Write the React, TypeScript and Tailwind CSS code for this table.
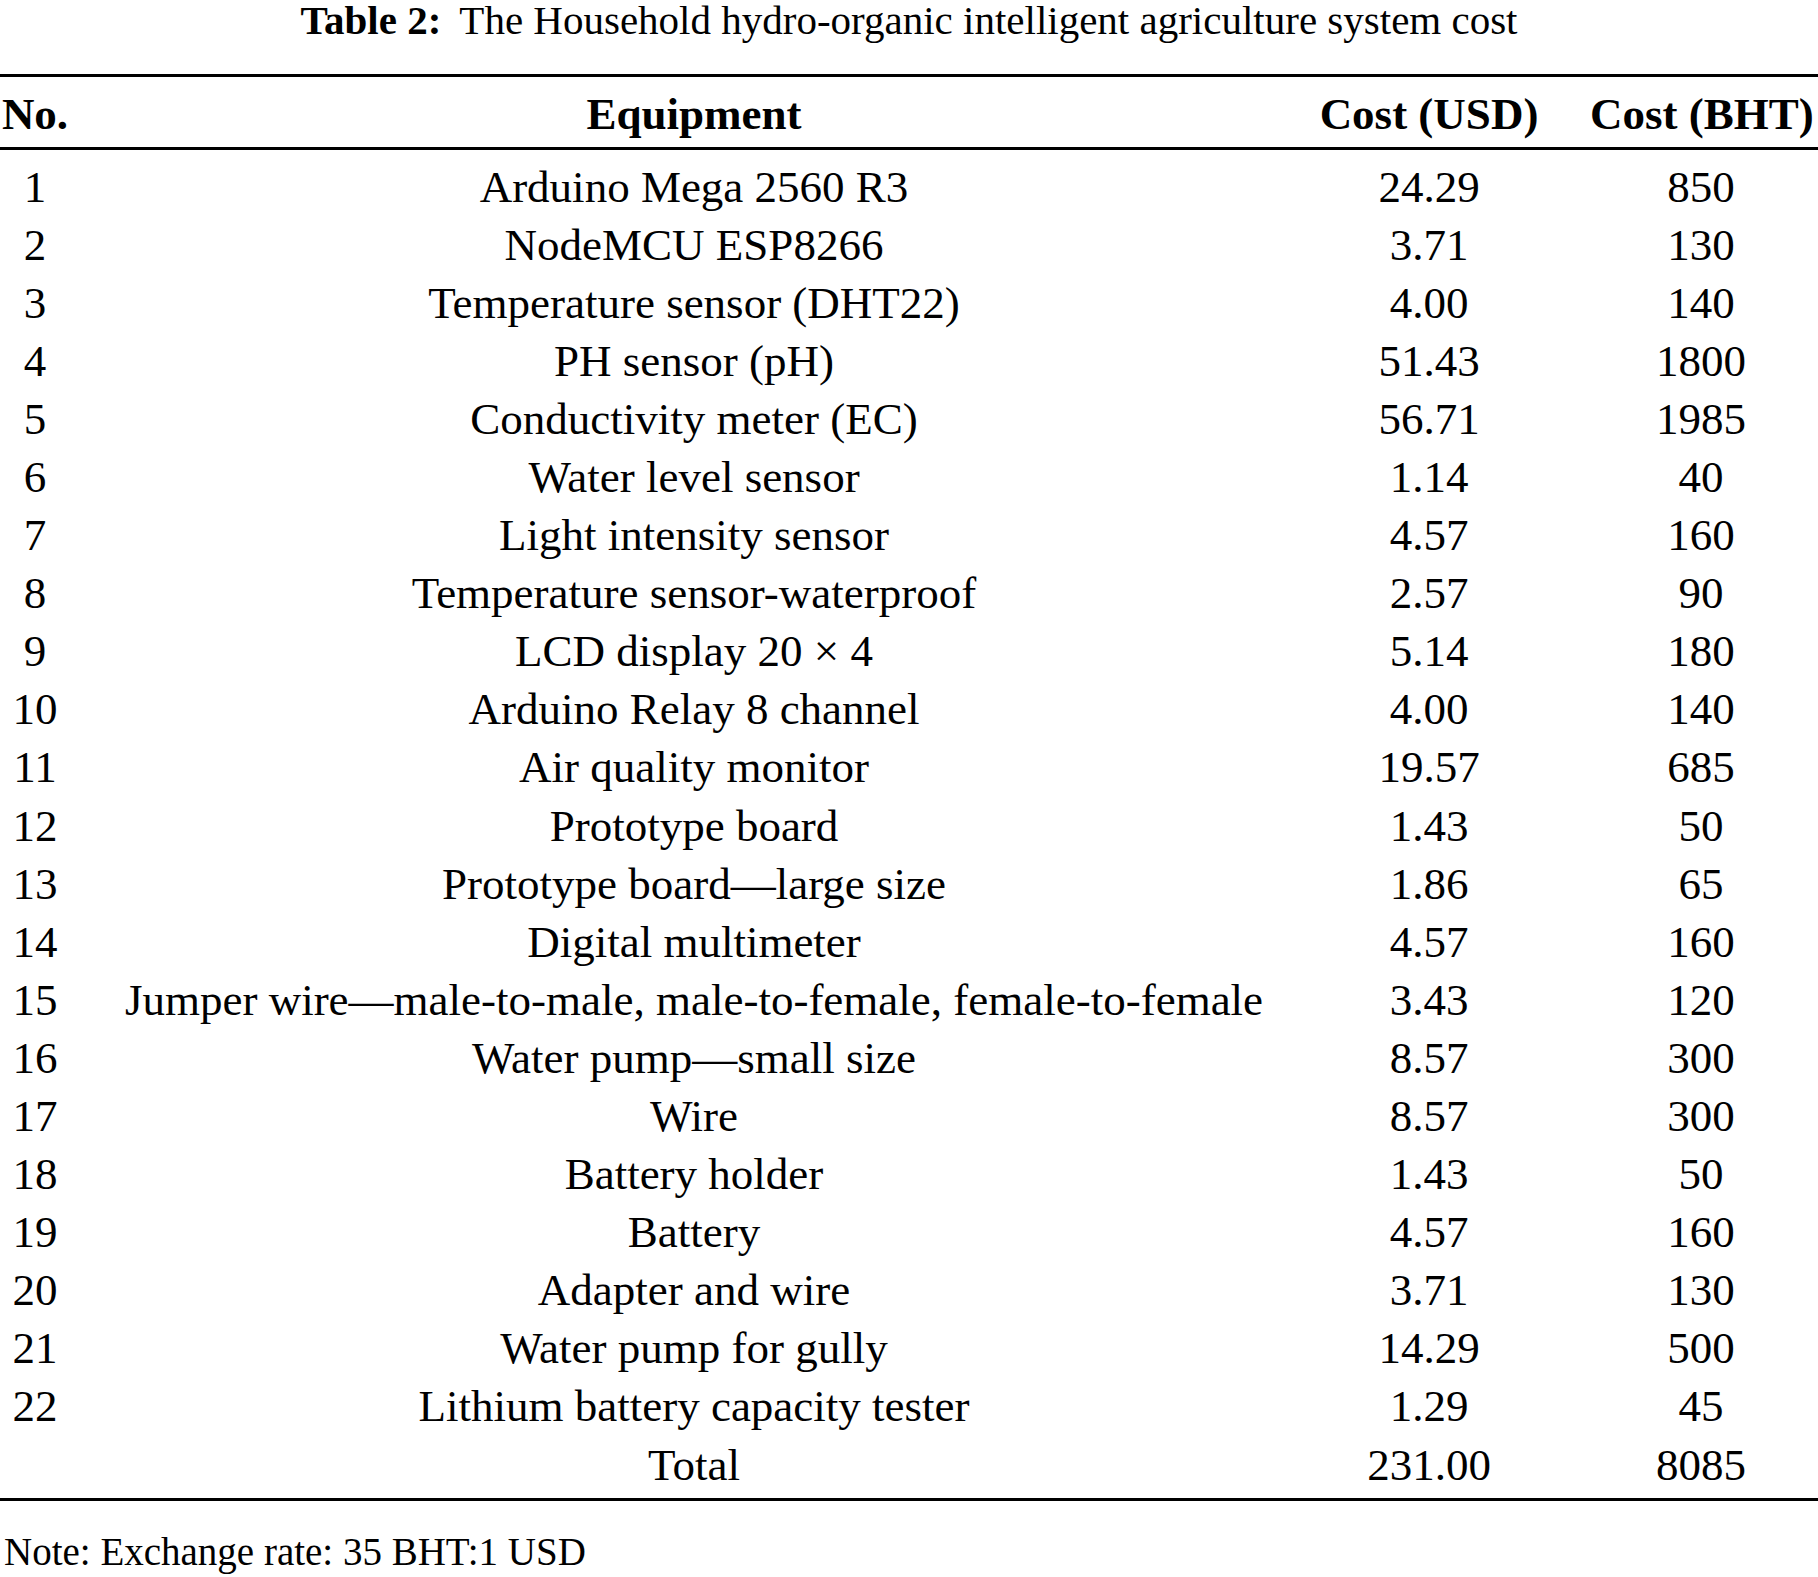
import React from "react";

type Item = {
  no: string;
  name: string;
  usd: string;
  bht: string;
};

const items: Item[] = [
  { no: "1", name: "Arduino Mega 2560 R3", usd: "24.29", bht: "850" },
  { no: "2", name: "NodeMCU ESP8266", usd: "3.71", bht: "130" },
  { no: "3", name: "Temperature sensor (DHT22)", usd: "4.00", bht: "140" },
  { no: "4", name: "PH sensor (pH)", usd: "51.43", bht: "1800" },
  { no: "5", name: "Conductivity meter (EC)", usd: "56.71", bht: "1985" },
  { no: "6", name: "Water level sensor", usd: "1.14", bht: "40" },
  { no: "7", name: "Light intensity sensor", usd: "4.57", bht: "160" },
  { no: "8", name: "Temperature sensor-waterproof", usd: "2.57", bht: "90" },
  { no: "9", name: "LCD display 20 \u00d7 4", usd: "5.14", bht: "180" },
  { no: "10", name: "Arduino Relay 8 channel", usd: "4.00", bht: "140" },
  { no: "11", name: "Air quality monitor", usd: "19.57", bht: "685" },
  { no: "12", name: "Prototype board", usd: "1.43", bht: "50" },
  { no: "13", name: "Prototype board\u2014large size", usd: "1.86", bht: "65" },
  { no: "14", name: "Digital multimeter", usd: "4.57", bht: "160" },
  {
    no: "15",
    name: "Jumper wire\u2014male-to-male, male-to-female, female-to-female",
    usd: "3.43",
    bht: "120",
  },
  { no: "16", name: "Water pump\u2014small size", usd: "8.57", bht: "300" },
  { no: "17", name: "Wire", usd: "8.57", bht: "300" },
  { no: "18", name: "Battery holder", usd: "1.43", bht: "50" },
  { no: "19", name: "Battery", usd: "4.57", bht: "160" },
  { no: "20", name: "Adapter and wire", usd: "3.71", bht: "130" },
  { no: "21", name: "Water pump for gully", usd: "14.29", bht: "500" },
  { no: "22", name: "Lithium battery capacity tester", usd: "1.29", bht: "45" },
  { no: "", name: "Total", usd: "231.00", bht: "8085" },
];

function App() {
  return (
    <div className="w-[1818px] min-h-[1577px] bg-white text-black font-['Liberation_Serif',serif]">
      <h2 className="text-center text-[41px] leading-[40px] font-normal whitespace-nowrap">
        <span className="font-bold">Table 2:</span>
        <span className="ml-[18px]">The Household hydro-organic intelligent agriculture system cost</span>
      </h2>

      <div className="mt-[34px] border-t-[3px] border-b-[3px] border-black">
        <table className="w-full table-fixed border-collapse text-[45px]">
          <colgroup>
            <col className="w-[70px]" />
            <col className="w-[1248px]" />
            <col className="w-[222px]" />
            <col className="w-[278px]" />
          </colgroup>
          <thead>
            <tr className="border-b-[3px] border-black">
              <th className="pt-[4px] leading-[66px] text-center font-bold whitespace-nowrap">No.</th>
              <th className="pt-[4px] leading-[66px] text-center font-bold">Equipment</th>
              <th className="pt-[4px] leading-[66px] text-center font-bold whitespace-nowrap">Cost (USD)</th>
              <th className="pt-[4px] pl-[50px] pr-[6px] leading-[66px] text-center font-bold whitespace-nowrap">
                Cost (BHT)
              </th>
            </tr>
          </thead>
          <tbody>
            <tr className="h-[9px]">
              <td colSpan={4} className="p-0" />
            </tr>
            {items.map((item, i) => (
              <tr key={i} className="leading-[58.1px]">
                <td className="text-center">{item.no}</td>
                <td className="text-center whitespace-nowrap">{item.name}</td>
                <td className="text-center">{item.usd}</td>
                <td className="pl-[50px] pr-[6px] text-center">{item.bht}</td>
              </tr>
            ))}
            <tr className="h-[4px]">
              <td colSpan={4} className="p-0" />
            </tr>
          </tbody>
        </table>
      </div>

      <p className="mt-[31px] pl-[4px] text-[39px] leading-[40px]">Note: Exchange rate: 35 BHT:1 USD</p>
    </div>
  );
}

export default App;
